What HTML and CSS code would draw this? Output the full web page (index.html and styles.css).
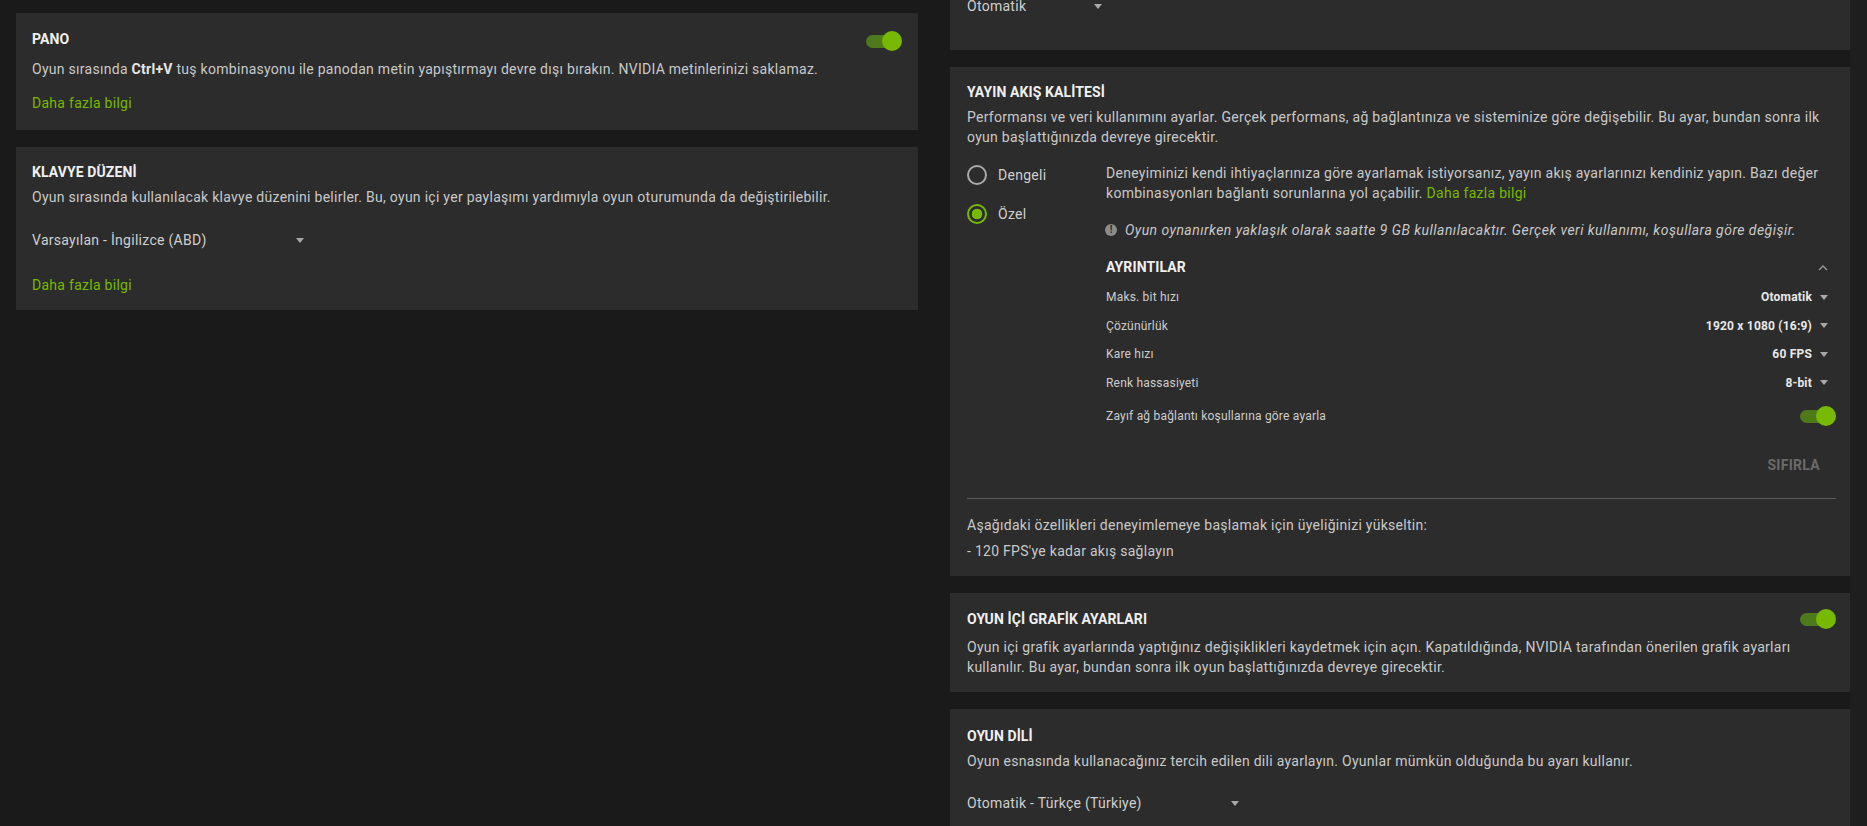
FILE: index.html
```html
<!DOCTYPE html>
<html lang="tr">
<head>
<meta charset="utf-8">
<title>Ayarlar</title>
<link rel="stylesheet" href="styles.css">
</head>
<body>
<div class="window">
  <div class="content">
    <div class="col col-left">
      <section class="card card-pano">
        <div class="card-head">
          <h2 class="title">PANO</h2>
          <span class="toggle"></span>
        </div>
        <p class="desc mt8">Oyun sırasında <b>Ctrl+V</b> tuş kombinasyonu ile panodan metin yapıştırmayı devre dışı bırakın. NVIDIA metinlerinizi saklamaz.</p>
        <a class="link mt14">Daha fazla bilgi</a>
      </section>

      <section class="card card-klavye">
        <h2 class="title">KLAVYE DÜZENİ</h2>
        <p class="desc mt5">Oyun sırasında kullanılacak klavye düzenini belirler. Bu, oyun içi yer paylaşımı yardımıyla oyun oturumunda da değiştirilebilir.</p>
        <div class="dropdown wide mt23"><span>Varsayılan - İngilizce (ABD)</span><i class="arrow"></i></div>
        <a class="link mt25">Daha fazla bilgi</a>
      </section>
    </div>

    <div class="col col-right">
      <section class="card rcard card-top">
        <div class="dropdown narrow"><span>Otomatik</span><i class="arrow"></i></div>
      </section>

      <section class="card rcard card-stream">
        <h2 class="title">YAYIN AKIŞ KALİTESİ</h2>
        <p class="desc mt5">Performansı ve veri kullanımını ayarlar. Gerçek performans, ağ bağlantınıza ve sisteminize göre değişebilir. Bu ayar, bundan sonra ilk oyun başlattığınızda devreye girecektir.</p>

        <div class="mode">
          <div class="radios">
            <label class="radio-row"><span class="radio"></span><span>Dengeli</span></label>
            <label class="radio-row"><span class="radio on"></span><span>Özel</span></label>
          </div>
          <div class="details">
            <p class="desc">Deneyiminizi kendi ihtiyaçlarınıza göre ayarlamak istiyorsanız, yayın akış ayarlarınızı kendiniz yapın. Bazı değer kombinasyonları bağlantı sorunlarına yol açabilir. <a class="link">Daha fazla bilgi</a></p>
            <p class="info"><span class="info-icon">!</span><em>Oyun oynanırken yaklaşık olarak saatte 9 GB kullanılacaktır. Gerçek veri kullanımı, koşullara göre değişir.</em></p>
            <div class="details-head">
              <h3 class="title">AYRINTILAR</h3>
              <svg class="caret" width="10" height="7" viewBox="0 0 10 7"><path d="M1 6 L5 2 L9 6" fill="none" stroke="#9a9a9a" stroke-width="1.4"/></svg>
            </div>
            <div class="rows">
              <div class="row"><span class="label">Maks. bit hızı</span><span class="value">Otomatik<i class="arrow"></i></span></div>
              <div class="row"><span class="label">Çözünürlük</span><span class="value">1920 x 1080 (16:9)<i class="arrow"></i></span></div>
              <div class="row"><span class="label">Kare hızı</span><span class="value">60 FPS<i class="arrow"></i></span></div>
              <div class="row"><span class="label">Renk hassasiyeti</span><span class="value">8-bit<i class="arrow"></i></span></div>
            </div>
            <div class="row toggle-row"><span class="label">Zayıf ağ bağlantı koşullarına göre ayarla</span><span class="toggle"></span></div>
            <div class="reset-row"><span class="reset">SIFIRLA</span></div>
          </div>
        </div>

        <hr class="divider">
        <p class="desc mt16">Aşağıdaki özellikleri deneyimlemeye başlamak için üyeliğinizi yükseltin:</p>
        <p class="desc mt6">- 120 FPS'ye kadar akış sağlayın</p>
      </section>

      <section class="card rcard card-graphics">
        <div class="card-head">
          <h2 class="title">OYUN İÇİ GRAFİK AYARLARI</h2>
          <span class="toggle"></span>
        </div>
        <p class="desc mt8">Oyun içi grafik ayarlarında yaptığınız değişiklikleri kaydetmek için açın. Kapatıldığında, NVIDIA tarafından önerilen grafik ayarları kullanılır. Bu ayar, bundan sonra ilk oyun başlattığınızda devreye girecektir.</p>
      </section>

      <section class="card rcard card-lang">
        <h2 class="title">OYUN DİLİ</h2>
        <p class="desc mt5">Oyun esnasında kullanacağınız tercih edilen dili ayarlayın. Oyunlar mümkün olduğunda bu ayarı kullanır.</p>
        <div class="dropdown wide mt22"><span>Otomatik - Türkçe (Türkiye)</span><i class="arrow"></i></div>
        <a class="link mt25">Daha fazla bilgi</a>
      </section>
    </div>
  </div>
  <div class="scrolltrack"></div>
</div>
</body>
</html>
```

FILE: styles.css
```css
* { box-sizing: border-box; }

html, body {
  margin: 0;
  padding: 0;
  height: 100%;
  overflow: hidden;
  background: #1a1a1a;
}

body {
  font-family: Roboto, "Noto Sans", "Liberation Sans", sans-serif;
  font-size: 14px;
  line-height: 20px;
  letter-spacing: 0.28px;
  color: #c9c9c9;
}

.window {
  display: flex;
  height: 826px;
  overflow: hidden;
}

.content {
  flex: 1;
  display: flex;
  gap: 32px;
  padding: 13px 0 0 16px;
  align-items: flex-start;
}

.scrolltrack {
  width: 17px;
  flex: none;
  background: #1e1e1e;
}

.col {
  display: flex;
  flex-direction: column;
  gap: 17px;
}

.col-left { width: 902px; }
.col-right { width: 900px; }

.card {
  background: #2c2c2c;
  display: flex;
  flex-direction: column;
  align-items: flex-start;
  padding: 15px 16px 15px 16px;
}

.rcard { padding-left: 17px; padding-right: 14px; }

.card > .desc, .card > .divider { align-self: stretch; }

.card-head {
  display: flex;
  justify-content: space-between;
  align-items: flex-start;
  align-self: stretch;
}

.title {
  margin: 0;
  font-size: 14px;
  font-weight: 700;
  line-height: 20px;
  color: #f0f0f0;
  letter-spacing: 0.1px;
}

.desc {
  margin: 0;
  color: #c9c9c9;
}
.desc b { color: #e6e6e6; }

.link {
  color: #76b900;
  text-decoration: none;
  cursor: pointer;
}

.mt5 { margin-top: 5px; }
.mt6 { margin-top: 6px; }
.mt8 { margin-top: 8px; }
.mt14 { margin-top: 14px; }
.mt16 { margin-top: 16px; }
.mt22 { margin-top: 22px; }
.mt23 { margin-top: 23px; }
.mt25 { margin-top: 25px; }

/* Cards specific */
.card-pano { padding-top: 16px; padding-bottom: 17px; }
.card-pano .toggle { margin-top: 2px; }

.card-top {
  margin-top: -120px;
  padding-top: 103px;
  padding-bottom: 34px;
}

.card-graphics { padding-top: 16px; }

.card-lang { padding-top: 17px; }

/* Dropdown */
.dropdown {
  display: flex;
  align-items: center;
  justify-content: space-between;
  color: #cfcfcf;
  height: 20px;
}
.dropdown.wide { width: 272px; }
.dropdown.narrow { width: 135px; }

.arrow {
  display: inline-block;
  width: 0;
  height: 0;
  border-left: 4.5px solid transparent;
  border-right: 4.5px solid transparent;
  border-top: 5px solid #a8a8a8;
}

/* Toggle */
.toggle {
  position: relative;
  display: inline-block;
  width: 36px;
  height: 20px;
  flex: none;
}
.toggle::before {
  content: "";
  position: absolute;
  left: 0;
  top: 3.5px;
  width: 30px;
  height: 13px;
  border-radius: 7px;
  background: #4f7a1c;
}
.toggle::after {
  content: "";
  position: absolute;
  right: 0;
  top: 0;
  width: 20px;
  height: 20px;
  border-radius: 50%;
  background: #76b900;
}

/* Streaming mode */
.mode {
  display: flex;
  align-self: stretch;
  margin-top: 16px;
}

.radios {
  width: 139px;
  flex: none;
  display: flex;
  flex-direction: column;
  gap: 19px;
  padding-top: 2px;
}

.radio-row {
  display: flex;
  align-items: center;
  gap: 11px;
  height: 20px;
  color: #cfcfcf;
}

.radio {
  width: 20px;
  height: 20px;
  border-radius: 50%;
  border: 2px solid #a9a9a9;
  flex: none;
}
.radio.on {
  border-color: #76b900;
  background: radial-gradient(circle, #76b900 0 5px, transparent 5.6px);
}

.details {
  flex: 1;
  display: flex;
  flex-direction: column;
}

.info {
  margin: 17px 0 0 0;
  display: flex;
  align-items: center;
  gap: 8px;
  color: #c9c9c9;
}
.info em { font-style: italic; letter-spacing: 0.45px; }

.info-icon {
  width: 12px;
  height: 12px;
  border-radius: 50%;
  background: #8c8c8c;
  color: #2c2c2c;
  font-size: 10px;
  font-weight: 700;
  line-height: 12px;
  text-align: center;
  letter-spacing: 0;
  flex: none;
  margin-left: -1px;
}

.details-head {
  margin-top: 17px;
  display: flex;
  justify-content: space-between;
  align-items: center;
  padding-right: 8px;
}

.caret { display: block; }

.rows {
  margin-top: 6px;
  display: flex;
  flex-direction: column;
}

.row {
  height: 28.5px;
  display: flex;
  justify-content: space-between;
  align-items: center;
  font-size: 12px;
  letter-spacing: 0.2px;
  padding-right: 8px;
}

.label { color: #cdcdcd; }

.value {
  display: flex;
  align-items: center;
  gap: 8px;
  color: #e8e8e8;
  font-weight: 700;
}

.toggle-row {
  height: 20px;
  margin-top: 9px;
  padding-right: 0;
}

.reset-row {
  margin-top: 29px;
  display: flex;
  justify-content: flex-end;
  padding-right: 16px;
}

.reset {
  font-weight: 700;
  font-size: 14px;
  color: #6a6a6a;
  line-height: 20px;
}

.divider {
  margin: 23px 0 0 0;
  border: none;
  height: 1px;
  background: #5a5a5a;
}
```
